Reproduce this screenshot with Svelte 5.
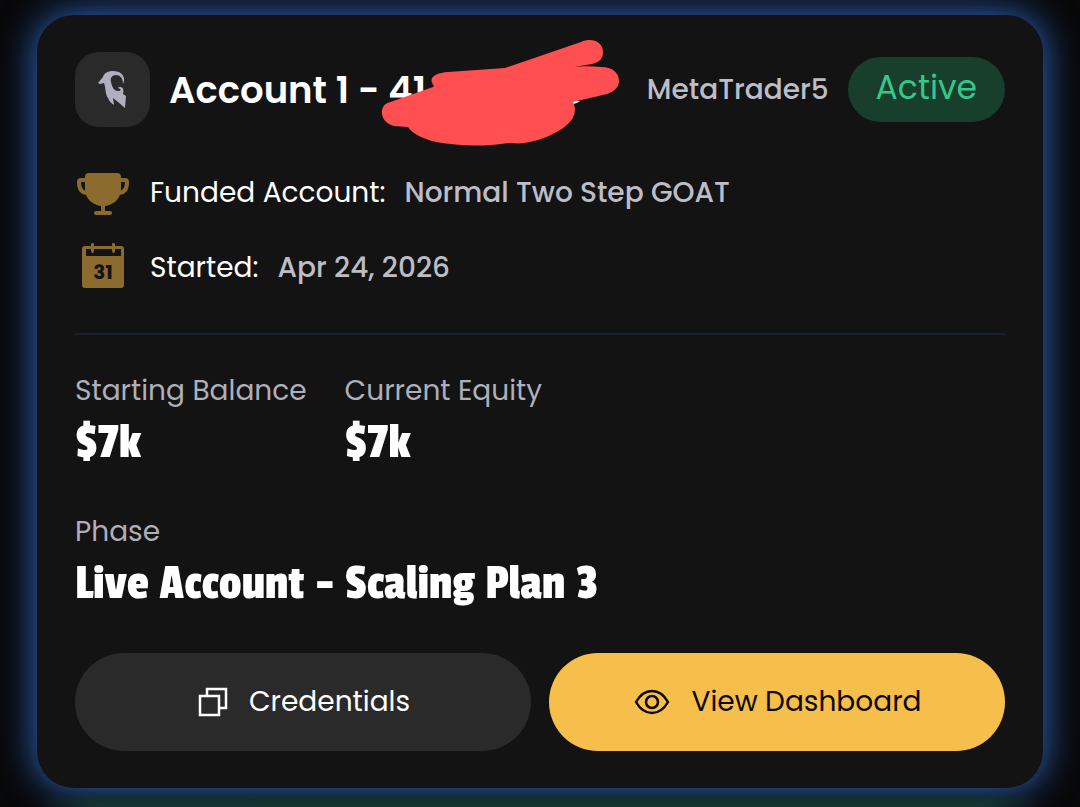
<script lang="ts">
  const account = {
    name: 'Account 1 - 41',
    platform: 'MetaTrader5',
    status: 'Active',
    program: 'Normal Two Step GOAT',
    started: 'Apr 24, 2026',
    phase: 'Live Account - Scaling Plan 3'
  };

  const balances = [
    { label: 'Starting Balance', value: '$7k' },
    { label: 'Current Equity', value: '$7k' }
  ];
</script>

<main class="page">
  <article class="card">
    <header class="card-header">
      <div class="logo">
        <svg viewBox="0 0 75 75" aria-hidden="true">
          <path d="M23 31L28 25C29 21 33 19 38 19C45 19 50 23 49 29L48 32C48 26 45 23 41 23C37 23 35 26 36 30C37 35 39 39 43 39C46 39 47 37 43 36C44 34 48 35 48 37C49 39 48 40 48 42L51 44L50 56L43 50L38 46L39 53C36 51 34 49 33 46C30 42 31 36 29 31L25 32Z" />
        </svg>
      </div>
      <h1 class="title">
        {account.name}
        <svg class="scribble" viewBox="0 0 240 108" aria-hidden="true">
          <path class="digit" d="M192 61L199 61L196 63L192 64Z" />
          <path d="M53 46C46 37 55 33 67 32L124 28L200 2C211-3 222 2 222 12C222 19 218 22 211 24L193 27C201 26 211 26 220 27C233 27 238 34 238 41C238 47 233 52 226 54L192 62C198 74 189 84 179 90C165 99 143 105 131 103L127 103C100 107 78 106 55 102C39 98 31 93 27 87L13 86C4 84 0 77 1 70C3 62 8 63 18 59L52 47Z" />
        </svg>
      </h1>
      <span class="platform">{account.platform}</span>
      <span class="status">{account.status}</span>
    </header>

    <dl class="details">
      <div class="detail">
        <svg class="detail-icon" viewBox="0 0 56 56" aria-hidden="true">
          <path d="M14 9H42Q46 9 46 13V25C46 35 38 41 30 42V47H35Q37 47 37 49T35 51H21Q19 51 19 49T21 47H26V42C18 41 10 35 10 25V13Q10 9 14 9Z" />
          <path class="handle" d="M11 16H6Q4 16 4 18C4 25 7 29 13 29M45 16H50Q52 16 52 18C52 25 49 29 43 29" />
        </svg>
        <dt>Funded Account:</dt>
        <dd>{account.program}</dd>
      </div>
      <div class="detail">
        <svg class="detail-icon" viewBox="0 0 56 56" aria-hidden="true">
          <path fill-rule="evenodd" d="M10 7H16V5Q16 4 17.500 4T19 5V7H37V5Q37 4 38.500 4T40 5V7H46Q49 7 49 10V46Q49 49 46 49H10Q7 49 7 46V10Q7 7 10 7ZM11 10V17H46V10H40V12Q40 14 38.500 14T37 12V10H19V12Q19 14 17.500 14T16 12V10Z" />
          <text x="28" y="40" text-anchor="middle">31</text>
        </svg>
        <dt>Started:</dt>
        <dd>{account.started}</dd>
      </div>
    </dl>

    <hr />

    <dl class="stats">
      {#each balances as b}
        <div class="stat">
          <dt>{b.label}</dt>
          <dd>{b.value}</dd>
        </div>
      {/each}
      <div class="stat wide">
        <dt>Phase</dt>
        <dd>{account.phase}</dd>
      </div>
    </dl>

    <div class="actions">
      <button type="button" class="btn">
        <svg class="copy" viewBox="0 0 30 30" aria-hidden="true">
          <path d="M2 9H21V28H2ZM9 9V2H28V21H21" />
        </svg>
        Credentials
      </button>
      <button type="button" class="btn btn-primary">
        <svg class="eye" viewBox="0 0 36 26" aria-hidden="true">
          <path d="M2 13C6 6 11 2 18 2S30 6 34 13C30 20 25 24 18 24S6 20 2 13Z" />
          <circle cx="18" cy="13" r="6" />
        </svg>
        View Dashboard
      </button>
    </div>
  </article>
</main>

<style>
  :global(body) {
    margin: 0;
    background: #080809;
  }
  .page {
    padding: 15px 37px 0;
    font-family: Poppins, Inter, sans-serif;
    font-size: 28px;
    line-height: 42px;
    color: #fff;
    overflow: hidden;
  }
  /* glow rising from the next card in the list */
  .page::after {
    content: '';
    display: block;
    height: 19px;
    background: linear-gradient(to top, #14332f 4px, transparent 18px);
    mask-image: linear-gradient(to right, transparent, #000 60px, #000 calc(100% - 60px), transparent);
  }
  .card {
    padding: 37px 38px;
    background: #131313;
    border-radius: 37px;
    box-shadow: 0 0 37px 1px #2f69c9;
  }

  .card-header {
    display: flex;
    align-items: center;
    gap: 19px;
    margin-bottom: 37px;
  }
  .logo {
    width: 75px;
    height: 75px;
    border-radius: 24px;
    background: #2a2a2a;
  }
  .logo svg {
    display: block;
    fill: #afafbf;
  }
  .title {
    position: relative;
    flex: 1;
    margin: 0;
    font-size: 37px;
    font-weight: 600;
    line-height: 54px;
    white-space: nowrap;
  }
  .scribble {
    position: absolute;
    left: 212px;
    top: -23px;
    width: 240px;
    height: 108px;
    fill: #ff4f50;
  }
  .digit {
    fill: #fff;
  }
  .platform {
    color: #bdbdc7;
    font-weight: 500;
  }
  .status {
    padding: 10px 28px 13px;
    border-radius: 33px;
    background: #183e2c;
    color: #36c78b;
    font-size: 33px;
  }

  dl,
  dd {
    margin: 0;
  }
  .details {
    display: grid;
    gap: 19px;
  }
  .detail {
    display: flex;
    align-items: center;
    gap: 19px;
  }
  .detail dt,
  .detail dd {
    padding-top: 2px;
  }
  .detail-icon {
    width: 56px;
    height: 56px;
    fill: #8b6c2e;
  }
  .handle {
    fill: none;
    stroke: #8b6c2e;
    stroke-width: 4;
  }
  .detail-icon text {
    fill: #131313;
    font-size: 20px;
    font-weight: 700;
  }
  .detail dd {
    color: #bdbdc7;
    font-weight: 500;
  }
  hr {
    height: 2px;
    margin: 38px 0 35px;
    border: 0;
    background: #1b2130;
  }

  .stats {
    display: grid;
    grid-template-columns: max-content 1fr;
    gap: 40px 38px;
    margin-bottom: 41px;
  }
  .wide {
    grid-column: 1 / -1;
  }
  .stat dt {
    color: #afafb9;
  }
  .stat dd {
    margin-top: 3px;
    font-family: 'Passion One', 'Barlow Condensed', Roboto, sans-serif;
    font-size: 50px;
    font-weight: 400;
    line-height: 56px;
  }

  .actions {
    display: grid;
    grid-template-columns: 1fr 1fr;
    gap: 18px;
  }
  .btn {
    display: flex;
    align-items: center;
    justify-content: center;
    gap: 21px;
    height: 98px;
    padding: 0 0 0 2px;
    border: 0;
    border-radius: 49px;
    background: #2a2a2a;
    color: #fff;
    font: inherit;
    cursor: pointer;
  }
  .btn-primary {
    background: #f6bf4b;
    color: #0d0905;
  }
  .btn svg {
    fill: none;
    stroke: currentColor;
    stroke-width: 2.5;
  }
  .copy {
    width: 30px;
    height: 30px;
  }
  .eye {
    width: 36px;
    height: 26px;
  }
</style>
